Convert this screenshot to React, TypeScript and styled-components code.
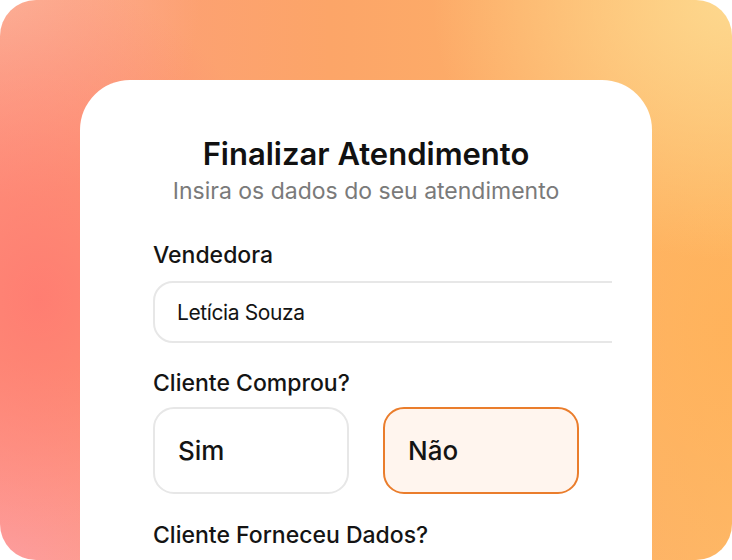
import React from "react";
import styled, { createGlobalStyle } from "styled-components";

const Global = createGlobalStyle`
  html, body { margin: 0; padding: 0; background: #ffffff; }
  body { font-family: "Inter", "Noto Sans", sans-serif; }
  * { box-sizing: border-box; }
`;

const Backdrop = styled.div`
  width: 732px;
  height: 560px;
  border-radius: 36px;
  overflow: hidden;
  padding: 80px 80px 0 80px;
  background:
    radial-gradient(ellipse 260px 320px at 40px 300px, rgba(255, 120, 112, 0.85), rgba(255, 120, 112, 0) 100%),
    radial-gradient(ellipse 300px 260px at 732px 0px, rgba(253, 216, 142, 1), rgba(253, 216, 142, 0) 100%),
    radial-gradient(ellipse 220px 300px at 732px 330px, rgba(255, 178, 90, 0.9), rgba(255, 178, 90, 0) 100%),
    radial-gradient(ellipse 260px 200px at 0px 560px, rgba(253, 164, 166, 1), rgba(253, 164, 166, 0) 100%),
    radial-gradient(ellipse 200px 200px at 0px 0px, rgba(252, 176, 150, 1), rgba(252, 176, 150, 0) 100%),
    linear-gradient(90deg, #fd9c7e 0%, #fca568 45%, #feb868 100%);
`;

const Card = styled.div`
  width: 572px;
  height: 480px;
  background: #ffffff;
  border-radius: 50px 50px 0 0;
  padding-top: 56px;
  display: flex;
  flex-direction: column;
  align-items: center;
`;

const Title = styled.h1`
  margin: 0;
  font-size: 31px;
  line-height: 36px;
  font-weight: 600;
  color: #111111;
`;

const Subtitle = styled.p`
  margin: 5px 0 0 0;
  font-size: 23px;
  line-height: 28px;
  font-weight: 400;
  color: #7a7a7a;
`;

const Form = styled.div`
  align-self: flex-start;
  margin-left: 73px;
  margin-top: 36px;
  width: 459px;
  overflow: hidden;
  display: flex;
  flex-direction: column;
`;

const Label = styled.div<{ $gap?: number }>`
  font-size: 23px;
  line-height: 28px;
  font-weight: 500;
  color: #141414;
  margin-top: ${(p) => p.$gap ?? 0}px;
`;

const Input = styled.div`
  margin-top: 12px;
  width: 540px;
  height: 62px;
  border: 2px solid #e7e7e7;
  border-radius: 20px;
  padding-left: 22px;
  display: flex;
  align-items: center;
  font-size: 21px;
  letter-spacing: -0.4px;
  color: #141414;
`;

const Choices = styled.div`
  margin-top: 10px;
  display: flex;
  gap: 34px;
`;

const Choice = styled.div<{ $active?: boolean }>`
  width: 196px;
  height: 87px;
  border-radius: 21px;
  border: 2px solid ${(p) => (p.$active ? "#ea7d2c" : "#e7e7e7")};
  background: ${(p) => (p.$active ? "#fff5ee" : "#ffffff")};
  padding-left: 23px;
  display: flex;
  align-items: center;
  font-size: 26px;
  font-weight: 500;
  color: #141414;
`;

export default function App() {
  return (
    <>
      <Global />
      <Backdrop>
        <Card>
          <Title>Finalizar Atendimento</Title>
          <Subtitle>Insira os dados do seu atendimento</Subtitle>
          <Form>
            <Label>Vendedora</Label>
            <Input>Letícia Souza</Input>
            <Label $gap={26}>Cliente Comprou?</Label>
            <Choices>
              <Choice>Sim</Choice>
              <Choice $active>Não</Choice>
            </Choices>
            <Label $gap={27}>Cliente Forneceu Dados?</Label>
          </Form>
        </Card>
      </Backdrop>
    </>
  );
}
